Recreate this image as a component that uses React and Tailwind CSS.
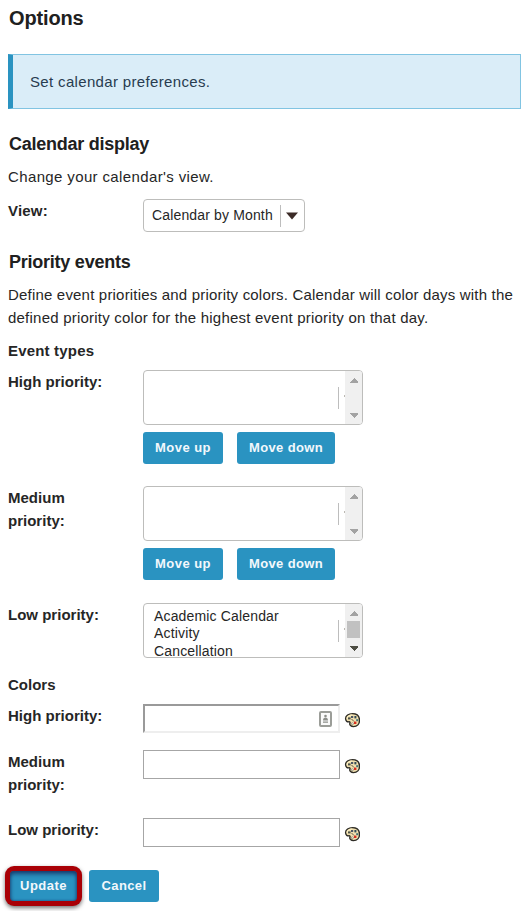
import React from 'react';

const label = 'w-[135px] shrink-0 pr-10 font-bold tracking-[0.01px]';
const button =
  'flex h-8 items-center justify-center rounded-[3px] bg-[#2a93c1] text-[13px] font-bold leading-8 text-[#f2f8fc]';

function Triangle({ up = false, className }) {
  return (
    <svg width="8" height="5" viewBox="0 0 8 5" className={className} shapeRendering="crispEdges">
      <path d={up ? 'M0 5V4L4 0L8 4V5Z' : 'M0 0V1L4 5L8 1V0Z'} fill="currentColor" />
    </svg>
  );
}

function ListBox({ items = [], thumb = false }) {
  return (
    <div className="flex h-[55px] w-[220px] overflow-hidden rounded-[4px] border border-[#bdbdbb] bg-white">
      <div className="flex-1 pl-[10px] pt-[4px] text-[14px] leading-[17.4px] tracking-[0.16px]">
        {items.map((item) => (
          <div key={item} className="whitespace-nowrap last:h-[14px] last:leading-[17px]">{item}</div>
        ))}
      </div>
      <div className="mt-4 h-[22px] w-px bg-[#bdbdbd]" />
      <div className="ml-[5px] mt-[24px] h-[2px] w-px bg-[#bbb8b2]" />
      <div className="flex w-[17px] flex-col items-center bg-[#f0f0f0] pt-[7px]">
        <Triangle up className="mb-[5px] shrink-0 text-[#a3a3a3]" />
        <div className={thumb ? 'h-[17px] w-[13px] shrink-0 bg-[#c1c1c1]' : 'h-[17px] w-[13px] shrink-0'} />
        <Triangle className={thumb ? 'mt-[8px] shrink-0 text-[#4d4d43]' : 'mt-[8px] shrink-0 text-[#a3a3a3]'} />
      </div>
    </div>
  );
}

function MoveButtons() {
  return (
    <div className="mt-[7px] flex gap-[14px]">
      <button className={`${button} w-20 tracking-[0.45px]`}>Move up</button>
      <button className={`${button} w-[98px] tracking-[0.36px]`}>Move down</button>
    </div>
  );
}

function Palette() {
  return (
    <svg width="16" height="16" viewBox="0 0 16 16" className="ml-[4px] mt-[8px] shrink-0">
      <path
        d="M8.5 1.6C4.6 1.6 1.6 3.6 1.6 6.6c0 2.3 1.5 3.5 3.3 3.2 1.1-.1 1.3.5 1 1.4-.6 1.9 1 3.4 3.6 3.4 3.7 0 6-2.6 6-6.1 0-4.3-2.6-6.9-7-6.9Z"
        fill="#f0dfae"
        stroke="#2d2b25"
        strokeWidth="1.4"
      />
      <path d="M3 6.7C3 4.2 5.4 3 8 3" fill="none" stroke="#fff4c8" />
      <rect x="4" y="5.4" width="2.6" height="2" fill="#4b5148" />
      <rect x="7" y="4" width="2.2" height="2" fill="#4b5664" />
      <rect x="10.4" y="4" width="2" height="2.4" fill="#314b58" />
      <rect x="12.2" y="7.2" width="2" height="2" fill="#427077" />
      <rect x="10" y="9.6" width="2.4" height="2.4" fill="#d92d20" />
      <circle cx="8.4" cy="11.8" r="1" fill="#fff" stroke="#6b6552" strokeWidth=".6" />
      <path d="m7.5 7 2.5 2.5" stroke="#655747" />
    </svg>
  );
}

function ContactIcon() {
  return (
    <svg width="13" height="16" viewBox="0 0 13 16" className="mr-[6px]">
      <rect x="1" y="1" width="11" height="14" rx="1" fill="#fafafa" stroke="#9b9d98" strokeWidth="2" />
      <circle cx="6.5" cy="5" r="1.3" fill="#8c8e89" />
      <path d="M4 9.5C4 7.6 5 6.4 6.5 6.4S9 7.6 9 9.5ZM4 10.6h5v1.2H4Z" fill="#8c8e89" />
    </svg>
  );
}

export default function App() {
  return (
    <main className="flex h-[911px] w-[532px] flex-col overflow-hidden bg-white pl-2 font-['Liberation_Sans',Arial,sans-serif] text-[15px] leading-[23px] text-[#262626]">
      <h1 className="mt-[6px] h-6 pl-px text-[20px] font-bold leading-6 tracking-[-0.15px] text-[#202020]">Options</h1>
      <div className="mt-6 h-[55px] w-[513px] shrink-0 border border-l-[5px] border-[#81c4e2] border-l-[#2a93c1] bg-[#daedf8] pl-[17px] pt-[15px] tracking-[0.34px] text-[#283c50]">
        Set calendar preferences.
      </div>

      <h2 className="mt-[23px] h-6 pl-px text-[18px] font-bold leading-6 tracking-[-0.25px] text-[#202020]">Calendar display</h2>
      <p className="mt-[9px] tracking-[0.37px]">Change your calendar's view.</p>
      <div className="mt-[11px] flex h-[33px]">
        <div className={label}>
          <span className="tracking-[0.2px]">View:</span>
        </div>
        <div className="flex h-[33px] w-[162px] items-center rounded-[4px] border border-[#bdbdbb] pl-2">
          <span className="w-[128px] whitespace-nowrap text-[14px] tracking-[0.15px]">Calendar by Month</span>
          <span className="h-[22px] w-px bg-[#bdbdbd]" />
          <svg width="12" height="8" viewBox="0 0 12 8" className="ml-[5px]">
            <path d="M0 0.5H12L6 7.5Z" fill="#3b2b27" />
          </svg>
        </div>
      </div>

      <h2 className="mt-[18px] h-6 pl-px text-[18px] font-bold leading-6 tracking-[-0.24px] text-[#202020]">Priority events</h2>
      <p className="mt-[9px] whitespace-nowrap">
        <span className="tracking-[0.19px]">Define event priorities and priority colors. Calendar will color days with the</span>
        <br />
        <span className="tracking-[0.22px]">defined priority color for the highest event priority on that day.</span>
      </p>
      <h3 className="mt-[10px] font-bold tracking-[0.18px]">Event types</h3>
      <div className="mt-2 flex h-[94px]">
        <div className={label}><span className="whitespace-nowrap">High priority:</span></div>
        <div><ListBox /><MoveButtons /></div>
      </div>
      <div className="mt-[22px] flex h-[94px]">
        <div className={label}>Medium priority:</div>
        <div><ListBox /><MoveButtons /></div>
      </div>
      <div className="mt-[23px] flex h-[55px]">
        <div className={label}><span className="whitespace-nowrap">Low priority:</span></div>
        <ListBox items={['Academic Calendar', 'Activity', 'Cancellation']} thumb />
      </div>

      <h3 className="mt-[15px] font-bold tracking-[0.01px]">Colors</h3>
      <div className="mt-2 flex h-[29px]">
        <div className={label}><span className="whitespace-nowrap">High priority:</span></div>
        <div className="flex h-[29px] w-[197px] items-center justify-end border-2 border-[#eeeeee] border-l-[#9a9a9a] border-t-[#9a9a9a]">
          <ContactIcon />
        </div>
        <Palette />
      </div>
      <div className="mt-[17px] flex h-[46px]">
        <div className={label}>Medium priority:</div>
        <div className="h-[29px] w-[197px] border border-[#a6a6a6]" />
        <Palette />
      </div>
      <div className="mt-[22px] flex h-[29px]">
        <div className={label}><span className="whitespace-nowrap">Low priority:</span></div>
        <div className="h-[29px] w-[197px] border border-[#a6a6a6]" />
        <Palette />
      </div>

      <div className="-ml-[3px] mt-[19px] flex h-10">
        <div className="h-10 w-[77px] rounded-[9px] bg-[#a90006] p-[5px] shadow-[0_2px_4px_rgba(0,0,0,0.55)]">
          <button className="h-[30px] w-[67px] rounded-[4px] bg-[#2a93c1] pb-[1px] text-[13px] font-bold leading-[29px] tracking-[0.45px] text-[#f2f8fc] shadow-[inset_0_3px_4px_rgba(20,40,90,0.75),inset_0_0_3px_rgba(20,40,90,0.6)]">
            Update
          </button>
        </div>
        <button className={`${button} ml-[7px] mt-1 w-[70px] tracking-[0.4px]`}>Cancel</button>
      </div>
    </main>
  );
}
